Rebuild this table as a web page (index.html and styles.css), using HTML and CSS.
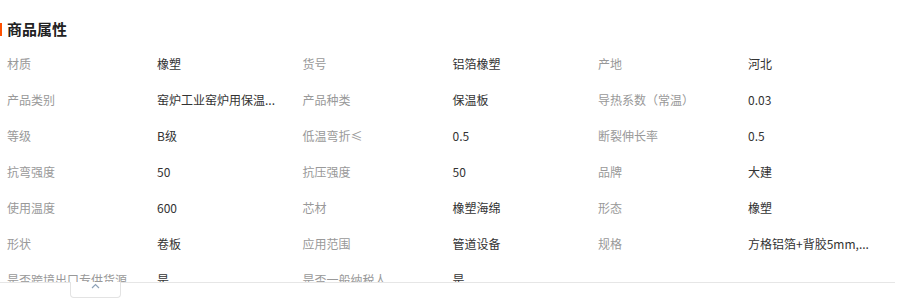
FILE: index.html
```html
<!DOCTYPE html>
<html lang="zh-CN">
<head>
<meta charset="utf-8">
<link rel="stylesheet" href="styles.css">
</head>
<body>
<section class="attrs">
  <h2 class="attrs-title">商品属性</h2>
  <div class="attrs-clip">
    <dl class="attrs-grid">
      <dt>材质</dt><dd><span>橡塑</span></dd>
      <dt>货号</dt><dd><span>铝箔橡塑</span></dd>
      <dt>产地</dt><dd><span>河北</span></dd>
      <dt>产品类别</dt><dd><span title="窑炉工业窑炉用保温材料">窑炉工业窑炉用保温...</span></dd>
      <dt>产品种类</dt><dd><span>保温板</span></dd>
      <dt>导热系数（常温）</dt><dd><span>0.03</span></dd>
      <dt>等级</dt><dd><span>B级</span></dd>
      <dt>低温弯折≤</dt><dd><span>0.5</span></dd>
      <dt>断裂伸长率</dt><dd><span>0.5</span></dd>
      <dt>抗弯强度</dt><dd><span>50</span></dd>
      <dt>抗压强度</dt><dd><span>50</span></dd>
      <dt>品牌</dt><dd><span>大建</span></dd>
      <dt>使用温度</dt><dd><span>600</span></dd>
      <dt>芯材</dt><dd><span>橡塑海绵</span></dd>
      <dt>形态</dt><dd><span>橡塑</span></dd>
      <dt>形状</dt><dd><span>卷板</span></dd>
      <dt>应用范围</dt><dd><span>管道设备</span></dd>
      <dt>规格</dt><dd><span title="方格铝箔+背胶5mm,10mm">方格铝箔+背胶5mm,...</span></dd>
      <dt>是否跨境出口专供货源</dt><dd><span>是</span></dd>
      <dt>是否一般纳税人</dt><dd><span>是</span></dd>
    </dl>
  </div>
  <div class="attrs-foot">
    <button class="toggle" type="button" aria-label="收起">
      <svg width="9" height="6" viewBox="0 0 9 6"><polyline points="1,5 4.5,1.5 8,5" fill="none" stroke="#8da2b8" stroke-width="1.2"/></svg>
    </button>
  </div>
</section>
</body>
</html>
```
FILE: styles.css
```css
html, body {
  margin: 0;
  padding: 0;
  background: #fff;
}
body {
  font-family: "Noto Sans", "Noto Sans CJK SC", sans-serif;
  font-size: 12px;
  color: #333;
}
.attrs {
  width: 895px;
}
.attrs-title {
  position: relative;
  margin: 0;
  padding: 19px 0 0 7px;
  height: 26px;
  line-height: 20px;
  font-size: 15px;
  font-weight: bold;
  color: #222;
  font-family: "Noto Sans CJK SC", sans-serif;
}
.attrs-title::before {
  content: "";
  position: absolute;
  left: 0;
  top: 23px;
  width: 2px;
  height: 13px;
  background: #ff5000;
}
.attrs-clip {
  height: 237px;
  overflow: hidden;
  border-bottom: 1px solid #e6e6e6;
}
.attrs-grid {
  margin: 0;
  padding-left: 7px;
  display: grid;
  grid-template-columns: repeat(3, 150px 145.5px);
  grid-auto-rows: 36px;
}
.attrs-grid dt,
.attrs-grid dd {
  margin: 0;
  display: flex;
  align-items: center;
  white-space: nowrap;
  font-family: "Noto Sans CJK SC", sans-serif;
}
.attrs-grid dt {
  color: #999;
}
.attrs-grid dd {
  color: #333;
}
.attrs-grid dd span {
  display: block;
}
.attrs-foot {
  padding-left: 70px;
}
.toggle {
  display: flex;
  align-items: center;
  justify-content: center;
  width: 51px;
  height: 16px;
  margin-top: -1px;
  padding: 0 0 7px;
  border: 1px solid #e3e3e3;
  border-top: none;
  border-radius: 0 0 4px 4px;
  background: #fff;
}
```
